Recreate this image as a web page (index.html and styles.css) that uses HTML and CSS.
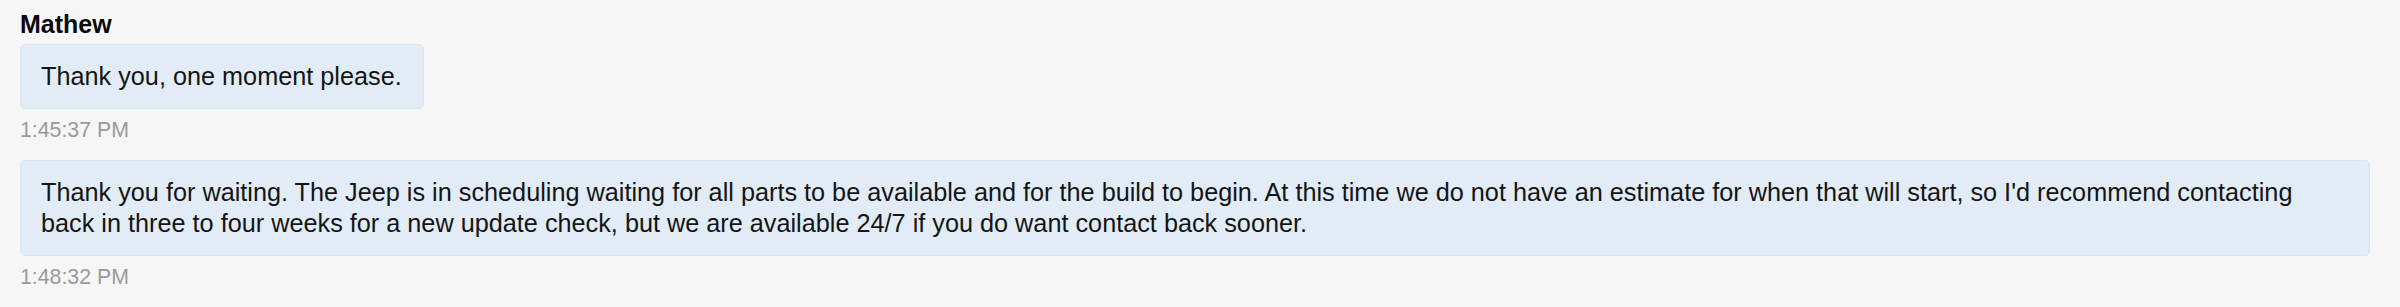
FILE: index.html
```html
<!DOCTYPE html>
<html lang="en">
<head>
<meta charset="utf-8">
<title>Chat</title>
<link rel="stylesheet" href="styles.css">
</head>
<body>
<div class="chat">
  <div class="group">
    <div class="sender">Mathew</div>
    <div class="bubble">Thank you, one moment please.</div>
    <div class="time">1:45:37 PM</div>
  </div>
  <div class="group">
    <div class="bubble">Thank you for waiting. The Jeep is in scheduling waiting for all parts to be available and for the build to begin. At this time we do not have an estimate for when that will start, so I'd recommend contacting back in three to four weeks for a new update check, but we are available 24/7 if you do want contact back sooner.</div>
    <div class="time">1:48:32 PM</div>
  </div>
</div>
</body>
</html>
```
FILE: styles.css
```css
html, body {
  margin: 0;
  padding: 0;
  background: #f6f6f6;
}
body {
  font-family: "Liberation Sans", Arial, sans-serif;
  color: #141414;
}
.chat {
  display: flex;
  flex-direction: column;
  gap: 17px;
  padding: 9px 30px 0 20px;
}
.group {
  display: flex;
  flex-direction: column;
  align-items: flex-start;
}
.sender {
  font-weight: bold;
  font-size: 25px;
  line-height: 31px;
  color: #0a0a0a;
  margin-bottom: 4px;
}
.bubble {
  background: #e1ecf7;
  border: 1px solid #d9e5f1;
  border-radius: 5px;
  padding: 16px 21px 16px 20px;
  font-size: 25.25px;
  line-height: 31px;
  color: #141414;
}
.time {
  margin-top: 8px;
  font-size: 21.3px;
  line-height: 26px;
  color: #9a9a9a;
}
```
